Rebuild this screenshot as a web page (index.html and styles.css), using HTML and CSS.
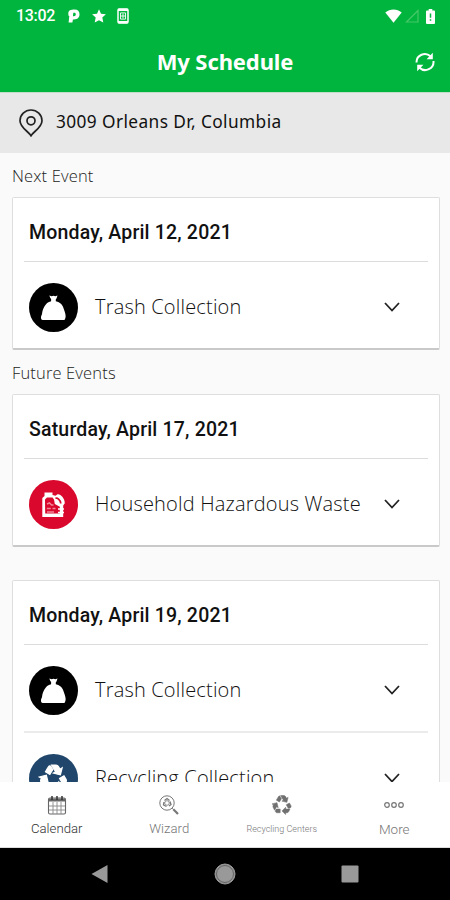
FILE: index.html
```html
<!DOCTYPE html>
<html lang="en">
<head>
<meta charset="utf-8">
<title>My Schedule</title>
<link rel="stylesheet" href="styles.css">
</head>
<body>
<svg class="defs" aria-hidden="true">
  <symbol id="bag" viewBox="0 0 49 49"><circle cx="24.500" cy="24.500" r="24.500"/><path fill="#fff" d="M20.300 12.500l2.400.700 1.800-.500 1.800.5 2.200-.7-1 3-.7.700v2c3.600.8 6 2.500 7.200 5.500l1.500 4.400c1.100 3.200 1.600 5.500.7 7.400-.3 1-.8 1.500-1.500 1.500H13.700c-1.100 0-1.900-1.300-1.700-3 .2-1.300.9-1.900 1.100-3.400.200-2.500 1-4.700 2.300-7 1.500-3 3.600-4.700 6.700-5.400v-2.300l-.8-.8z"/></symbol>
  <symbol id="recycle" viewBox="0 0 24 24"><path d="M5.770 7.150 7.200 4.780l1.030-1.710c.39-.65 1.330-.65 1.720 0l1.480 2.460-1.230 2.060-1 1.620-3.430-2.060zm15.950 5.820-1.600-2.660-3.460 2L18.870 16H20c.76 0 1.450-.43 1.790-1.110.14-.28.21-.58.21-.89 0-.36-.1-.71-.28-1.030zM16 21h1.500c.76 0 1.450-.43 1.790-1.110L20.740 17H16v-2l-4 4 4 4v-2zm-6-4H5.700l-.84 1.410c-.3.5-.32 1.120-.06 1.650.28.57.87.94 1.520.94H10v-4zm-3.880-2.650 1.730 1.040L6.480 9.900 1 11.270l1.700 1.020-.41.690c-.35.59-.38 1.310-.07 1.920l1.630 3.260 2.270-3.810zm10.900-9.210-1.300-2.170C15.350 2.370 14.700 2 14 2h-3.530l3.120 5.200-1.720 1.030 5.490 1.370 1.370-5.490-1.710 1.030z"/></symbol>
  <symbol id="chevron" viewBox="0 0 16 10"><path d="M1 1l7 7.500L15 1" fill="none" stroke="#222" stroke-width="1.800"/></symbol>
</svg>
<div class="phone">
  <header class="top">
    <div class="status">
      <span class="clock">13:02</span>
      <svg class="st-p" viewBox="0 0 12 14"><path fill="#fff" fill-rule="evenodd" d="M1.500 1.500C3 .6 5 .5 6.500.5c3.300 0 5 1.700 5 4.700 0 3.300-2 5.200-5.500 5.200H4.900L4.400 13.600H.6L1.300 7H.7C0 4.600.2 2.600 1.500 1.500zM5.300 3.800L4.900 7.200h.9c1.300 0 2-.700 2-1.900 0-1-.6-1.500-1.500-1.500z"/></svg>
      <svg class="st-star" viewBox="0 0 14 14"><path fill="#fff" d="M7 .3l2 4.500 4.900.5-3.600 3.300 1 5L7 11.200l-4.300 2.400 1-5L.1 5.300 5 4.800z"/></svg>
      <svg class="st-sim" viewBox="0 0 12 16"><rect x="1" y="1" width="10" height="14" rx="1.200" fill="none" stroke="#fff" stroke-width="1.500"/><path stroke="#fff" stroke-width="2.400" d="M1 1.900h10M1 14.100h10"/><path d="M3.500 4.900h5v6.200h-5zM6 5.500v5M4 8h4" fill="none" stroke="#fff" stroke-width=".9"/></svg>
      <span class="grow"></span>
      <svg class="st-wifi" viewBox="0 0 17 14"><path fill="#fff" d="M.3 3.500C5-.6 12-.6 16.700 3.500L8.500 13.800z"/></svg>
      <svg class="st-signal" viewBox="0 0 14 14"><path d="M1.500 13H13V1.500z" fill="none" stroke="#45c76a" stroke-width="1.200"/></svg>
      <svg class="st-battery" viewBox="0 0 9 15"><path fill="#fff" d="M2.700 0h3.600v1.500H8q1 0 1 1V14q0 1-1 1H1q-1 0-1-1V2.500q0-1 1-1h1.700z"/><path stroke="#00b53e" stroke-width="1.500" d="M4.500 4.500v4.300M4.500 10.200v1.500"/></svg>
    </div>
    <div class="titlebar">
      <h1>My Schedule</h1>
      <svg class="refresh" viewBox="0 0 20 20"><g fill="none" stroke="#fff" stroke-width="2"><path d="M1.500 10.500A8.300 8.300 0 0 1 15.500 4.300"/><path d="M18.500 9A8.300 8.300 0 0 1 4.500 15.700"/></g><path fill="#fff" d="M17.800.8v6.400h-6.200zM2.200 19.200v-6.400h6.200z"/></svg>
    </div>
  </header>
  <div class="address">
    <svg viewBox="0 0 24 28"><path d="M12 26.700C9.500 22.500 1 18.500 1 11.700a11 10.700 0 0 1 22 0c0 6.800-8.500 10.800-11 15z" fill="none" stroke="#222" stroke-width="1.700"/><circle cx="12" cy="11.800" r="4" fill="none" stroke="#222" stroke-width="1.700"/></svg>
    <span>3009 Orleans Dr, Columbia</span>
  </div>
  <main>
    <h2 class="next">Next Event</h2>
    <section class="card">
      <h3>Monday, April 12, 2021</h3>
      <div class="row"><svg class="badge"><use href="#bag"/></svg><span class="name">Trash Collection</span><svg class="chev"><use href="#chevron"/></svg></div>
    </section>
    <h2 class="future">Future Events</h2>
    <section class="card">
      <h3>Saturday, April 17, 2021</h3>
      <div class="row"><svg class="badge" viewBox="0 0 49 49"><circle cx="24.500" cy="24.500" r="24.500" fill="#d9082c"/><path fill="#fff" d="M15.500 12.500h8v2.500l3 .800 2-1.500c3.300-.6 7.500 4.500 7.300 9l-1.600 2.200V37H13.300V18l2.200-2z"/><path fill="#d9082c" d="M16 19.500l2-2h5.500l1.500 2 .8 4.500 5 2.700v6.800H16.200z"/><path d="M26.500 18.500c1.500-1.500 5 1.500 5.300 5" fill="none" stroke="#d9082c" stroke-width="1.700"/><path d="M18 24l2.500-1 2 2h2M17.800 28.500h4M23.500 28.500h3M18 32h7" stroke="#ef8798" fill="none" stroke-width="1.500"/><path stroke="#fff" stroke-width="1.500" d="M29 29h6M29 32.500h6"/></svg><span class="name">Household Hazardous Waste</span><svg class="chev"><use href="#chevron"/></svg></div>
    </section>
    <section class="card last">
      <h3>Monday, April 19, 2021</h3>
      <div class="row"><svg class="badge"><use href="#bag"/></svg><span class="name">Trash Collection</span><svg class="chev"><use href="#chevron"/></svg></div>
      <div class="row second"><svg class="badge" viewBox="0 0 49 49"><circle cx="24.500" cy="24.500" r="24.500" fill="#20476b"/><use href="#recycle" x="9" y="8.500" width="31" height="31" fill="#fff" stroke="#fff" stroke-width=".9"/></svg><span class="name">Recycling Collection</span><svg class="chev"><use href="#chevron"/></svg></div>
    </section>
  </main>
  <nav class="tabs">
    <div class="tab active"><svg viewBox="0 0 20 20"><rect x="1.500" y="3" width="17" height="16" rx="1.500" fill="none" stroke="#666" stroke-width="1.100"/><path d="M2 3.500h16V6.500H2z" fill="#666"/><path d="M2 11h16M2 15h16M6 7v12M10 7v12M14 7v12" stroke="#888" stroke-width=".9"/><path d="M5 1v4M15 1v4M10 1v4" stroke="#333" stroke-width="1.500"/></svg><span>Calendar</span></div>
    <div class="tab"><svg viewBox="0 0 20 20"><g fill="none" stroke="#777"><circle cx="8" cy="8" r="7.200"/><path d="M5.500 5.500l2.500-2 2.500 2M11 6.500l1 3-2 1.500M7.500 11.500L4.500 10l.5-3" stroke-width="1.300"/><circle cx="8" cy="8" r="2.300" stroke-width=".8"/><path d="M13.200 13.200l1.300 1.300"/><path d="M14.300 14.300l4.700 4.700" stroke-width="2.200"/></g></svg><span>Wizard</span></div>
    <div class="tab"><svg viewBox="1 1.500 22 22"><use href="#recycle" width="24" height="24" fill="#707070" stroke="#707070" stroke-width=".6"/></svg><span class="small">Recycling Centers</span></div>
    <div class="tab"><svg viewBox="0 0 20 20"><g fill="none" stroke="#777" stroke-width="1.200"><circle cx="3" cy="10" r="2.300"/><circle cx="10" cy="10" r="2.300"/><circle cx="17" cy="10" r="2.300"/></g></svg><span class="more">More</span></div>
  </nav>
  <footer class="system">
    <div><svg viewBox="0 0 22 22"><path fill="#999" d="M18.500 2v18L2.500 11z"/></svg></div>
    <div><svg viewBox="0 0 22 22"><circle cx="11" cy="11" r="10" fill="#999" stroke="#999"/><circle cx="11" cy="11" r="8.500" fill="none" stroke="#555" stroke-width=".8"/></svg></div>
    <div><svg viewBox="0 0 22 22"><rect x="2.500" y="2.500" width="17" height="17" rx="1" fill="#999"/></svg></div>
  </footer>
</div>
</body>
</html>
```
FILE: styles.css
```css
* { box-sizing: border-box; }
body { margin: 0; background: #fafafa; }
svg { display: block; flex: none; }
.defs { display: none; }
h1, h2, h3 { margin: 0; font-weight: 400; white-space: nowrap; }
.phone { width: 450px; height: 900px; display: flex; flex-direction: column; overflow: hidden; }

.top { height: 92px; flex: none; background: #00b53e; color: #fff; }
.status { height: 32px; display: flex; align-items: center; padding: 0 15px 0 16px; }
.clock { font: 500 16px/20px Roboto, sans-serif; width: 39px; letter-spacing: -.3px; }
.grow { flex: 1; }
.st-p { width: 12px; height: 14px; margin-left: 13px; }
.st-star { width: 14px; height: 14px; margin-left: 12px; }
.st-sim { width: 12px; height: 16px; margin-left: 11px; }
.st-wifi { width: 17px; height: 14px; }
.st-signal { width: 14px; height: 14px; margin-left: 3px; }
.st-battery { width: 9px; height: 15px; margin-left: 7px; }
.titlebar { height: 60px; display: grid; grid-template-columns: 1fr auto 1fr; align-items: center; }
h1 { grid-column: 2; font: 700 22px/30px "Noto Sans", sans-serif; letter-spacing: -.1px; position: relative; top: -1px; }
.refresh { width: 20px; height: 20px; justify-self: end; margin-right: 15px; }

.address { height: 61px; flex: none; display: flex; align-items: center; gap: 13px; padding: 0 0 3px 19px; background: #e8e8e8; border-top: 1px solid #c4ddca; color: #111; font: 400 17.300px/24px "Noto Sans", sans-serif; letter-spacing: .4px; }
.address svg { width: 24px; height: 28px; margin-top: 2px; }

main { flex: 1; min-height: 0; overflow: hidden; padding: 11px 10px 0 12px; }
h2 { font: 300 16.500px/24px "Open Sans", sans-serif; color: #222; letter-spacing: .15px; }
.future { margin-top: 11px; }
.card { height: 153px; margin-top: 9px; background: #fff; border: 1px solid #dedede; border-bottom: 2px solid #c9c9c9; border-radius: 2px; padding: 0 11px; }
.future + .card { margin-top: 9px; }
.card.last { height: 250px; margin-top: 33px; }
h3 { height: 64px; padding-left: 5px; border-bottom: 1px solid #dcdcdc; font: 500 19.500px/69px Roboto, sans-serif; color: #111; letter-spacing: .18px; }
.row { height: 86px; display: flex; align-items: center; padding: 4px 28px 0 5px; }
.row.second { border-top: 2px solid #ebebeb; height: 88px; }
.badge { width: 49px; height: 49px; }
.name { flex: 1; margin-left: 17px; font: 300 20px/28px "Open Sans", sans-serif; color: #111; white-space: nowrap; letter-spacing: .18px; }
.chev { width: 16px; height: 10px; }

.tabs { height: 66px; flex: none; background: #fff; display: grid; grid-template-columns: repeat(4, 1fr); border-bottom: 1px solid #ddd; }
.tab { display: flex; flex-direction: column; align-items: center; padding: 13px 0 0 1px; color: #777; font: 300 13.200px/20px Roboto, sans-serif; white-space: nowrap; }
.tab svg { width: 20px; height: 20px; margin-bottom: 4px; }
.tab.active { color: #333; }
.tab .small { font-size: 9px; }
.tab .more { font-size: 13.500px; }

.system { height: 52px; flex: none; background: #000; padding: 0 37px; display: grid; grid-template-columns: repeat(3, 1fr); align-items: center; justify-items: center; }
.system svg { width: 22px; height: 22px; }
```
